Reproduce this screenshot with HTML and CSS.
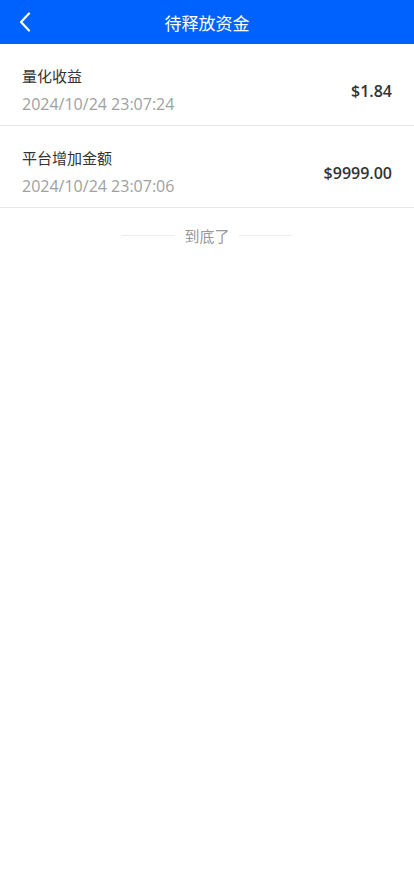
FILE: index.html
```html
<!DOCTYPE html>
<html lang="zh-cn">
    <head>
        <meta charset="UTF-8">
        <meta name="viewport" content="width=device-width, initial-scale=1.0">
        <title>待释放资金</title>
        <link rel="stylesheet" href="styles.css">
    </head>
    <body>
        <div class="nav-bar">
            <span class="nav-back">
                <svg width="12" height="20" viewBox="0 0 12 20">
                    <path d="M10 1.5 L2 10 L10 18.5" fill="none" stroke="#fff" stroke-width="2.2" stroke-linecap="round" stroke-linejoin="round"/>
                </svg>
            </span>
            <div class="nav-title">待释放资金</div>
        </div>
        <!-- 资金记录列表 -->
        <div class="record-list">
            <div class="record-item">
                <div class="record-info">
                    <div class="record-name">量化收益</div>
                    <div class="record-time">2024/10/24 23:07:24</div>
                </div>
                <div class="record-amount">$1.84</div>
            </div>
            <div class="record-item">
                <div class="record-info">
                    <div class="record-name">平台增加金额</div>
                    <div class="record-time">2024/10/24 23:07:06</div>
                </div>
                <div class="record-amount">$9999.00</div>
            </div>
        </div>
        <div class="list-end">
            <span class="end-line"></span>
            <span class="end-text">到底了</span>
            <span class="end-line"></span>
        </div>
    </body>
</html>
```

FILE: styles.css
```css
body {
    margin: 0;
    font-family: "Open Sans", "Noto Sans CJK SC", sans-serif;
    background-color: #fff;
}

.nav-bar {
    position: relative;
    height: 44px;
    background-color: #0062fe;
    display: flex;
    align-items: center;
    justify-content: center;
}

.nav-back {
    position: absolute;
    left: 19px;
    top: 12px;
    width: 12px;
    height: 20px;
    display: flex;
}

.nav-title {
    color: #fff;
    font-size: 17px;
}

.record-item {
    display: flex;
    align-items: center;
    justify-content: space-between;
    padding: 20px 22px 9px;
    border-bottom: 1px solid #e6e6e6;
}

.record-name {
    font-size: 15px;
    line-height: 24px;
    color: #333;
}

.record-time {
    font-size: 16px;
    line-height: 24px;
    margin-top: 4px;
    color: #a0a0a0;
}

.record-amount {
    font-size: 16px;
    font-weight: 600;
    color: #333;
    margin-top: 2px;
}

/* 列表底部提示 */
.list-end {
    display: flex;
    align-items: center;
    justify-content: center;
    gap: 9px;
    padding-top: 17px;
}

.end-line {
    width: 53px;
    height: 1px;
    background-color: #eee;
}

.end-text {
    font-size: 15px;
    color: #999;
}
```
